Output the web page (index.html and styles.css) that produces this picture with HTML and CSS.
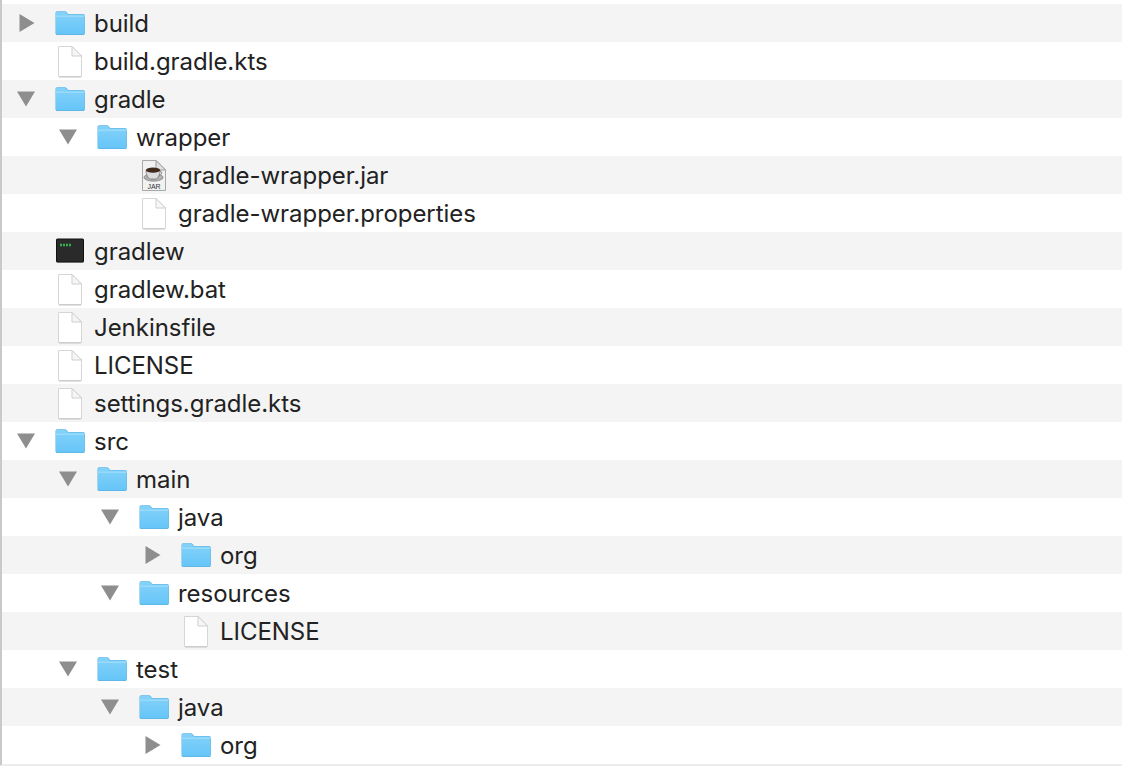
FILE: index.html
```html
<!DOCTYPE html>
<html lang="en">
<head>
<meta charset="utf-8">
<title>Project tree</title>
<link rel="stylesheet" href="styles.css">
</head>
<body>
<svg class="sprite" xmlns="http://www.w3.org/2000/svg" aria-hidden="true">
  <defs>
    <linearGradient id="folderFill" x1="0" y1="0" x2="0" y2="1">
      <stop offset="0" stop-color="#84d2f9"/>
      <stop offset="1" stop-color="#66c5f8"/>
    </linearGradient>
    <symbol id="folder" viewBox="0 0 32 26">
      <path d="M1.5 3.2C1.5 2 2.2 1.2 3.4 1.2H10.6C11.6 1.2 12.2 1.6 12.8 2.3L14.2 4H29C30.1 4 30.9 4.8 30.9 5.9V23.2C30.9 24.3 30.1 25 29 25H3.4C2.3 25 1.5 24.3 1.5 23.2Z" fill="#5cb3e2"/>
      <path d="M2 3.4C2 2.4 2.6 1.7 3.5 1.7H10.5C11.4 1.7 11.9 2 12.4 2.7L13.9 4.5H29C29.8 4.5 30.4 5.1 30.4 5.9V23C30.4 23.8 29.8 24.2 29 24.2H3.4C2.6 24.2 2 23.8 2 23Z" fill="url(#folderFill)"/>
      <path d="M2 6.2H30.4" stroke="#a8e0fb" stroke-width="1"/>
    </symbol>
    <symbol id="file" viewBox="0 0 26 33">
      <path d="M1.5 1.5H15L24.5 11V31.5H1.5Z" fill="#fff" stroke="#d6d6d6" stroke-width="1" stroke-linejoin="round"/>
      <path d="M15 1.5V11H24.5Z" fill="#f6f6f6" stroke="#cfcfcf" stroke-width="1" stroke-linejoin="round"/>
      <path d="M2 32H24" stroke="#c4c4c4" stroke-width="1"/>
    </symbol>
    <symbol id="jar" viewBox="0 0 26 33">
      <path d="M1.5 1.5H15L24.5 11V31.5H1.5Z" fill="#f2f2f2" stroke="#a8a8a8" stroke-width="1" stroke-linejoin="round"/>
      <path d="M15 1.5V11H24.5Z" fill="#e2e2e2" stroke="#9c9c9c" stroke-width="1" stroke-linejoin="round"/>
      <ellipse cx="12.5" cy="18.4" rx="9.6" ry="3.8" fill="#b0b0b0" stroke="#7c7c7c" stroke-width=".7"/>
      <path d="M5 11H19C19.2 15.5 17 19.6 14.5 20H9.5C7 19.6 4.8 15.5 5 11Z" fill="#dcdcdc" stroke="#6f6f6f" stroke-width=".7"/>
      <ellipse cx="12" cy="11.2" rx="7" ry="2.6" fill="#3f2a1c"/>
      <path d="M18.8 12.6C21.4 12 21.6 15.4 18 16.2" fill="none" stroke="#808080" stroke-width="1"/>
      <text x="13" y="29.6" class="jar-label">JAR</text>
    </symbol>
    <symbol id="terminal" viewBox="0 0 30 26">
      <rect x="1" y="1" width="28" height="24" rx="1" fill="#000" opacity=".18"/>
      <rect x="1.5" y="1" width="27" height="23" rx=".8" fill="#2a2a2a" stroke="#111" stroke-width="1"/>
      <path d="M5 7H7M8 7H10M11 7H13M14 7H16" stroke="#35b04e" stroke-width="2.4"/>
    </symbol>
    <symbol id="tri-right" viewBox="0 0 16 18">
      <path d="M.5 0L15.5 9L.5 18Z" fill="#8e8e8e"/>
    </symbol>
    <symbol id="tri-down" viewBox="0 0 18 16">
      <path d="M0 .5H18L9 15.5Z" fill="#8e8e8e"/>
    </symbol>
  </defs>
</svg>

<main class="tree">
  <div class="row lv0"><span class="twisty"><svg class="tri-r"><use href="#tri-right"/></svg></span><span class="icon"><svg class="ic-folder"><use href="#folder"/></svg></span><span class="name">build</span></div>
  <div class="row lv0"><span class="twisty"></span><span class="icon"><svg class="ic-file"><use href="#file"/></svg></span><span class="name">build.gradle.kts</span></div>
  <div class="row lv0"><span class="twisty"><svg class="tri-d"><use href="#tri-down"/></svg></span><span class="icon"><svg class="ic-folder"><use href="#folder"/></svg></span><span class="name">gradle</span></div>
  <div class="row lv1"><span class="twisty"><svg class="tri-d"><use href="#tri-down"/></svg></span><span class="icon"><svg class="ic-folder"><use href="#folder"/></svg></span><span class="name">wrapper</span></div>
  <div class="row lv2"><span class="twisty"></span><span class="icon"><svg class="ic-file"><use href="#jar"/></svg></span><span class="name">gradle-wrapper.jar</span></div>
  <div class="row lv2"><span class="twisty"></span><span class="icon"><svg class="ic-file"><use href="#file"/></svg></span><span class="name">gradle-wrapper.properties</span></div>
  <div class="row lv0"><span class="twisty"></span><span class="icon"><svg class="ic-folder"><use href="#terminal"/></svg></span><span class="name">gradlew</span></div>
  <div class="row lv0"><span class="twisty"></span><span class="icon"><svg class="ic-file"><use href="#file"/></svg></span><span class="name">gradlew.bat</span></div>
  <div class="row lv0"><span class="twisty"></span><span class="icon"><svg class="ic-file"><use href="#file"/></svg></span><span class="name">Jenkinsfile</span></div>
  <div class="row lv0"><span class="twisty"></span><span class="icon"><svg class="ic-file"><use href="#file"/></svg></span><span class="name">LICENSE</span></div>
  <div class="row lv0"><span class="twisty"></span><span class="icon"><svg class="ic-file"><use href="#file"/></svg></span><span class="name">settings.gradle.kts</span></div>
  <div class="row lv0"><span class="twisty"><svg class="tri-d"><use href="#tri-down"/></svg></span><span class="icon"><svg class="ic-folder"><use href="#folder"/></svg></span><span class="name">src</span></div>
  <div class="row lv1"><span class="twisty"><svg class="tri-d"><use href="#tri-down"/></svg></span><span class="icon"><svg class="ic-folder"><use href="#folder"/></svg></span><span class="name">main</span></div>
  <div class="row lv2"><span class="twisty"><svg class="tri-d"><use href="#tri-down"/></svg></span><span class="icon"><svg class="ic-folder"><use href="#folder"/></svg></span><span class="name">java</span></div>
  <div class="row lv3"><span class="twisty"><svg class="tri-r"><use href="#tri-right"/></svg></span><span class="icon"><svg class="ic-folder"><use href="#folder"/></svg></span><span class="name">org</span></div>
  <div class="row lv2"><span class="twisty"><svg class="tri-d"><use href="#tri-down"/></svg></span><span class="icon"><svg class="ic-folder"><use href="#folder"/></svg></span><span class="name">resources</span></div>
  <div class="row lv3"><span class="twisty"></span><span class="icon"><svg class="ic-file"><use href="#file"/></svg></span><span class="name">LICENSE</span></div>
  <div class="row lv1"><span class="twisty"><svg class="tri-d"><use href="#tri-down"/></svg></span><span class="icon"><svg class="ic-folder"><use href="#folder"/></svg></span><span class="name">test</span></div>
  <div class="row lv2"><span class="twisty"><svg class="tri-d"><use href="#tri-down"/></svg></span><span class="icon"><svg class="ic-folder"><use href="#folder"/></svg></span><span class="name">java</span></div>
  <div class="row lv3"><span class="twisty"><svg class="tri-r"><use href="#tri-right"/></svg></span><span class="icon"><svg class="ic-folder"><use href="#folder"/></svg></span><span class="name">org</span></div>
</main>
</body>
</html>
```
FILE: styles.css
```css
html, body {
  margin: 0;
  padding: 0;
  height: 100%;
  background: #fff;
  overflow: hidden;
}

.sprite {
  display: block;
  width: 0;
  height: 0;
}

.tree {
  box-sizing: border-box;
  height: 766px;
  padding-top: 4px;
  border-left: 2px solid #c9c9c9;
  border-bottom: 2px solid #ececec;
  font-family: Inter, "Liberation Sans", Arial, sans-serif;
  font-size: 24px;
  letter-spacing: -0.04px;
  color: #222;
}

.row {
  display: flex;
  align-items: center;
  height: 38px;
  box-sizing: border-box;
}

.row:nth-child(odd) {
  background: #f4f4f4;
}

.lv0 { padding-left: 14px; }
.lv1 { padding-left: 56px; }
.lv2 { padding-left: 98px; }
.lv3 { padding-left: 140px; }

.twisty {
  flex: 0 0 22px;
  width: 22px;
  display: flex;
  justify-content: center;
  align-items: center;
}

.tri-r {
  width: 16px;
  height: 18px;
  display: block;
}

.tri-d {
  width: 18px;
  height: 16px;
  display: block;
  flex: none;
  margin-right: 2px;
}

.icon {
  flex: 0 0 56px;
  width: 56px;
  padding-left: 16px;
  padding-right: 8px;
  box-sizing: border-box;
  display: flex;
  justify-content: center;
  align-items: center;
}

.ic-folder {
  width: 32px;
  height: 26px;
  display: block;
  flex: none;
}

.ic-file {
  width: 26px;
  height: 33px;
  display: block;
  flex: none;
}

.jar-label {
  font-family: "Liberation Sans", Arial, sans-serif;
  font-size: 7px;
  font-weight: 400;
  fill: #333;
  text-anchor: middle;
}

.name {
  white-space: nowrap;
  padding-top: 2px;
  line-height: 36px;
}
```
